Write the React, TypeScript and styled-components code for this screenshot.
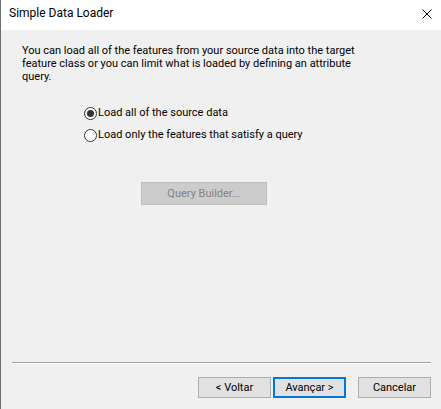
import React from "react";
import styled, { createGlobalStyle } from "styled-components";

const Global = createGlobalStyle`
  html, body { margin: 0; padding: 0; background: #f0f0f0; }
  body { font-family: Roboto, "Noto Sans", sans-serif; font-size: 11px; color: #000; }
  * { box-sizing: border-box; }
`;

const Window = styled.div`
  width: 441px;
  height: 409px;
  display: flex;
  flex-direction: column;
  border-left: 1px solid #6f6f6f;
  background: #f0f0f0;
  overflow: hidden;
`;

const TitleBar = styled.div`
  height: 30px;
  flex: none;
  background: #ffffff;
  display: flex;
  align-items: flex-start;
  justify-content: space-between;
  padding: 5px 9px 0 8px;
`;

const Title = styled.span`
  font-size: 12px;
  line-height: 16px;
  color: #000;
`;

const CloseButton = styled.div`
  width: 10px;
  height: 10px;
  margin-top: 4px;
  display: flex;
`;

const Body = styled.div`
  flex: 1;
  display: flex;
  flex-direction: column;
  padding: 14px 10px 11px 11px;
`;

const Intro = styled.p`
  margin: 0 0 0 10px;
  font-size: 11px;
  line-height: 13px;
  white-space: nowrap;
`;

const RadioGroup = styled.div`
  display: flex;
  flex-direction: column;
  gap: 9px;
  margin: 23px 0 0 72px;
`;

const RadioRow = styled.label`
  display: flex;
  align-items: flex-start;
  gap: 1px;
  height: 13px;
  line-height: 13px;
`;

const RadioCircle = styled.span<{ $checked?: boolean }>`
  width: 13px;
  height: 13px;
  margin-top: 1px;
  border-radius: 50%;
  border: 1px solid #333;
  background: #fff;
  display: flex;
  align-items: center;
  justify-content: center;
  flex: none;
  &::after {
    content: "";
    width: 7px;
    height: 7px;
    border-radius: 50%;
    background: #333;
    display: ${(p) => (p.$checked ? "block" : "none")};
  }
`;

const QueryButton = styled.div`
  margin: 41px 0 0 129px;
  width: 126px;
  height: 23px;
  background: #cccccc;
  border: 1px solid #bfbfbf;
  color: #838383;
  display: flex;
  align-items: center;
  justify-content: center;
`;

const Spacer = styled.div`
  flex: 1;
`;

const Separator = styled.div`
  height: 2px;
  border-top: 1px solid #a0a0a0;
  border-bottom: 1px solid #ffffff;
`;

const Footer = styled.div`
  display: flex;
  justify-content: flex-end;
  margin-top: 13px;
`;

const Button = styled.div<{ $default?: boolean; $gap?: number }>`
  width: 73px;
  height: 21px;
  margin-left: ${(p) => p.$gap ?? 0}px;
  background: #e1e1e1;
  border: ${(p) => (p.$default ? "2px solid #0078d7" : "1px solid #adadad")};
  display: flex;
  align-items: center;
  justify-content: center;
  font-size: 11px;
  color: #000;
`;

export default function App() {
  return (
    <>
      <Global />
      <Window>
        <TitleBar>
          <Title>Simple Data Loader</Title>
          <CloseButton>
            <svg width="10" height="10" viewBox="0 0 10 10">
              <path d="M0.5 0.5 L9.5 9.5 M9.5 0.5 L0.5 9.5" stroke="#000" strokeWidth="1" />
            </svg>
          </CloseButton>
        </TitleBar>
        <Body>
          <Intro>
            You can load all of the features from your source data into the target
            <br />
            feature class or you can limit what is loaded by defining an attribute
            <br />
            query.
          </Intro>
          <RadioGroup>
            <RadioRow>
              <RadioCircle $checked />
              Load all of the source data
            </RadioRow>
            <RadioRow>
              <RadioCircle />
              Load only the features that satisfy a query
            </RadioRow>
          </RadioGroup>
          <QueryButton>Query Builder...</QueryButton>
          <Spacer />
          <Separator />
          <Footer>
            <Button>&lt; Voltar</Button>
            <Button $default $gap={2}>Avançar &gt;</Button>
            <Button $gap={12}>Cancelar</Button>
          </Footer>
        </Body>
      </Window>
    </>
  );
}
